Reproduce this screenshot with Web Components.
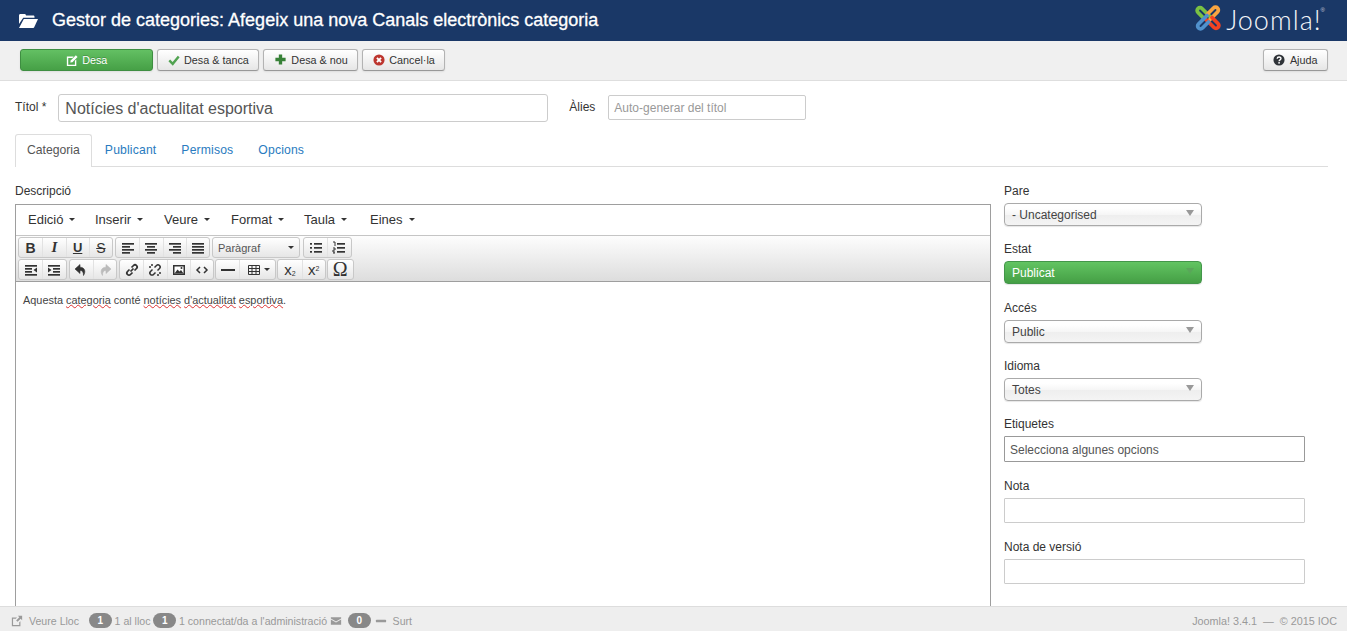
<!DOCTYPE html>
<html lang="ca">
<head>
<meta charset="utf-8">
<title>Gestor de categories</title>
<style>
    html, body { margin: 0; height: 100%; overflow: hidden; }
    body { font-family: "Liberation Sans", Arial, sans-serif; font-size: 12px; color: #333; background: #fff; }
</style>
</head>
<body>
<jm-app>
    <jm-header>Gestor de categories: Afegeix una nova Canals electrònics categoria</jm-header>
    <jm-subhead>
        <jm-btn kind="save" icon="edit" wide>Desa</jm-btn>
        <jm-btn icon="check">Desa &amp; tanca</jm-btn>
        <jm-btn icon="plus">Desa &amp; nou</jm-btn>
        <jm-btn icon="cancel">Cancel·la</jm-btn>
        <jm-btn slot="right" icon="help">Ajuda</jm-btn>
    </jm-subhead>
    <jm-form>
        <jm-titlerow></jm-titlerow>
        <jm-tabs></jm-tabs>
        <jm-editor slot="main"></jm-editor>
        <jm-side slot="side">
            <jm-select label="Pare" value="- Uncategorised" gap="15"></jm-select>
            <jm-select label="Estat" value="Publicat" green gap="16"></jm-select>
            <jm-select label="Accés" value="Public" gap="15"></jm-select>
            <jm-select label="Idioma" value="Totes" gap="15"></jm-select>
            <jm-input label="Etiquetes" value="Selecciona algunes opcions" strong gap="16"></jm-input>
            <jm-input label="Nota" gap="16"></jm-input>
            <jm-input label="Nota de versió" gap="0"></jm-input>
        </jm-side>
    </jm-form>
    <jm-status></jm-status>
</jm-app>

<script>
const ICONS = {
    edit: '<path d="M1 3h8L7.5 4.6H2.6v7.8h7.8V8l1.6-1.6V14H1z" fill="currentColor"/><path d="M11.5 1.5l2 2L7.5 9.5 5 10l.5-2.5z" fill="currentColor"/>',
    check: '<path d="M1.5 7.5L5.5 11.5 12.5 3" fill="none" stroke="currentColor" stroke-width="2.8"/>',
    plus: '<path d="M7 1.5v11M1.5 7h11" fill="none" stroke="currentColor" stroke-width="3.6"/>',
    cancel: '<circle cx="7" cy="7" r="6.5" fill="currentColor"/><path d="M4.6 4.6l4.8 4.8M9.4 4.6l-4.8 4.8" stroke="#fff" stroke-width="2.2"/>',
    help: '<circle cx="7" cy="7" r="6.5" fill="currentColor"/><path d="M4.9 5.4c0-2.6 4.4-2.6 4.4-.1 0 1.6-2.2 1.5-2.2 3.1" fill="none" stroke="#fff" stroke-width="1.6"/><rect x="6.2" y="9.4" width="1.8" height="1.8" fill="#fff"/>',
    external: '<path d="M1 3h6L5.6 4.4H2.4v7.2h7.2V8.6L11 7.2V13H1z" fill="currentColor"/><path d="M8 1h5v5l-1.7-1.7L7.6 8 6 6.4l3.700-3.700z" fill="currentColor"/>',
    mail: '<path d="M1 2.500h12v1.500L7 7.500 1 4zM1 5.300L7 8.700l6-3.400V11.500H1z" fill="currentColor"/>',
    minus: '<rect x="1" y="5.500" width="12" height="3" rx="1" fill="currentColor"/>'
}

function svgIcon(name, size, color) {
    return `<svg width="${size}" height="${size}" viewBox="0 0 14 14" style="color:${color};display:block;flex:none">${ICONS[name]}</svg>`
}

class JmApp extends HTMLElement {
    constructor() {
        super()
        this.attachShadow({ mode: 'open' })
        this.shadowRoot.innerHTML = `
            <style>
                :host { display: flex; flex-direction: column; height: 631px; overflow: hidden; }
                ::slotted(*) { flex: none; }
                ::slotted(jm-form) { flex: 1 1 0; min-height: 0; }
            </style>
            <slot></slot>
        `
    }
}

class JmHeader extends HTMLElement {
    constructor() {
        super()
        this.attachShadow({ mode: 'open' })
        const arm = 'M16.500 13L8 4.500A2.800 2.800 0 0 0 4 8.500L10 14.500'
        this.shadowRoot.innerHTML = `
            <style>
                :host { display: flex; align-items: center; height: 41px; padding: 0 22px 0 19px; background: #1a3867; color: #fff; }
                .folder { margin-right: 14px; flex: none; display: block; }
                .title { font-size: 18px; font-weight: 400; -webkit-text-stroke: 0.3px #fff; white-space: nowrap; flex: 1; }
                .logo { display: flex; align-items: flex-start; flex: none; height: 41px; }
                .mark { display: block; margin: 4px 4px 0 0; }
                .word { font-family: Lato, "Open Sans", sans-serif; font-weight: 300; font-size: 27px; line-height: 40px; letter-spacing: 1px; color: #f4f6f9; }
                .reg { font-size: 6px; line-height: 20px; color: #ccd; margin-left: -1px; }
            </style>
            <svg class="folder" width="19" height="14" viewBox="0 0 19 14">
                <path d="M0 1.500C0 .700.600 0 1.400 0h4.200c.800 0 1.200.600 1.400 1.400h7.200c.800 0 1.300.500 1.300 1.300V3.800H4.200L0 10z" fill="#fff"/>
                <path d="M4.800 5H19l-3.800 8.300c-.200.400-.500.700-1 .700H0z" fill="#fff"/>
            </svg>
            <div class="title"><slot></slot></div>
            <div class="logo">
                <svg class="mark" width="28" height="28" viewBox="0 0 28 28" fill="none" stroke-width="3.800" stroke-linecap="round">
                    <path stroke="#7ac143" d="${arm}"/>
                    <path stroke="#f9a541" d="${arm}" transform="rotate(90 14 14)"/>
                    <path stroke="#f44321" d="${arm}" transform="rotate(180 14 14)"/>
                    <path stroke="#5091cd" d="${arm}" transform="rotate(270 14 14)"/>
                </svg>
                <span class="word">Joomla!</span><span class="reg">®</span>
            </div>
        `
    }
}

class JmSubhead extends HTMLElement {
    constructor() {
        super()
        this.attachShadow({ mode: 'open' })
        this.shadowRoot.innerHTML = `
            <style>
                :host { display: flex; align-items: center; gap: 4px; box-sizing: content-box; height: 37px; padding: 0 19px 2px 20px; background: #f0f0f0; border-bottom: 1px solid #dedede; }
                .right { margin-left: auto; display: flex; }
            </style>
            <slot></slot>
            <div class="right"><slot name="right"></slot></div>
        `
    }
}

class JmBtn extends HTMLElement {
    constructor() {
        super()
        this.attachShadow({ mode: 'open' })
        const kinds = { check: '#51a351', plus: '#378137', cancel: '#bd362f', help: '#2f3338', edit: '#fff' }
        const name = this.getAttribute('icon')
        this.shadowRoot.innerHTML = `
            <style>
                :host { display: inline-flex; align-items: center; justify-content: center; box-sizing: border-box; height: 22px; padding: 0 9.500px; gap: 4.500px;
                    font-size: 10.800px; color: #333; border: 1px solid #b3b3b3; border-bottom-color: #999; border-radius: 3px;
                    background: linear-gradient(#fff, #e6e6e6); box-shadow: 0 1px 2px rgba(0,0,0,.08); white-space: nowrap; }
                :host([kind="save"]) { color: #fff; border-color: #3e8e41; background: linear-gradient(#63c063, #46a046); text-shadow: 0 -1px 0 rgba(0,0,0,.2); }
                :host([wide]) { width: 133px; }
            </style>
            ${svgIcon(name, name === 'plus' ? 13 : 12, kinds[name])}
            <slot></slot>
        `
    }
}

class JmForm extends HTMLElement {
    constructor() {
        super()
        this.attachShadow({ mode: 'open' })
        this.shadowRoot.innerHTML = `
            <style>
                :host { display: block; padding: 13px 19px 0 15px; overflow: hidden; }
                .cols { display: flex; gap: 13px; height: 100%; }
                .main { width: 976px; flex: none; }
                label { display: block; line-height: 15px; padding-top: 1px; margin-bottom: 5px; font-size: 12px; color: #333; }
            </style>
            <slot></slot>
            <div class="cols">
                <div class="main">
                    <label>Descripció</label>
                    <slot name="main"></slot>
                </div>
                <slot name="side"></slot>
            </div>
        `
    }
}

class JmTitlerow extends HTMLElement {
    constructor() {
        super()
        this.attachShadow({ mode: 'open' })
        this.shadowRoot.innerHTML = `
            <style>
                :host { display: flex; align-items: center; height: 28px; margin-bottom: 12px; font-size: 12px; color: #333; }
                label { flex: none; margin-top: -3px; }
                .title { box-sizing: border-box; width: 490px; height: 28px; margin-left: 12px; padding: 0 6px; font-size: 16px; line-height: 27px; color: #555;
                    border: 1px solid #ccc; border-radius: 3px; white-space: nowrap; }
                .alias-label { margin-left: 21px; }
                .alias { box-sizing: border-box; width: 198px; height: 25px; align-self: flex-start; margin: 1px 0 0 13px; padding: 0 5px; font-size: 12px; line-height: 24px; color: #999;
                    border: 1px solid #ccc; border-radius: 2px; white-space: nowrap; }
            </style>
            <label>Títol *</label>
            <div class="title">Notícies d'actualitat esportiva</div>
            <label class="alias-label">Àlies</label>
            <div class="alias">Auto-generar del títol</div>
        `
    }
}

class JmTabs extends HTMLElement {
    constructor() {
        super()
        this.attachShadow({ mode: 'open' })
        this.shadowRoot.innerHTML = `
            <style>
                :host { display: flex; height: 32px; margin-bottom: 16px; border-bottom: 1px solid #ddd; font-size: 12.200px; color: #2a7bc0; }
                a { display: block; padding: 0 11px; line-height: 31px; margin-right: 1px; border: 1px solid transparent; border-bottom: 0; height: 32px; letter-spacing: .15px; }
                a.on { color: #555; background: #fff; border-color: #ddd; border-radius: 3px 3px 0 0; letter-spacing: 0; }
            </style>
            <a class="on">Categoria</a>
            <a>Publicant</a>
            <a>Permisos</a>
            <a>Opcions</a>
        `
    }
}

// toolbar glyphs for the tinymce rows, 16x16 box
function lines(rows) {
    return rows.map(([x, y, w]) => `<rect x="${x}" y="${y}" width="${w}" height="1.700" fill="#333"/>`).join('')
}
const MCE = {
    left: lines([[2, 3, 12], [2, 6, 8], [2, 9, 12], [2, 12, 8]]),
    center: lines([[2, 3, 12], [4, 6, 8], [2, 9, 12], [4, 12, 8]]),
    right: lines([[2, 3, 12], [6, 6, 8], [2, 9, 12], [6, 12, 8]]),
    full: lines([[2, 3, 12], [2, 6, 12], [2, 9, 12], [2, 12, 12]]),
    ul: '<rect x="2" y="3" width="2" height="1.700" fill="#333"/><rect x="2" y="7" width="2" height="1.700" fill="#333"/><rect x="2" y="11" width="2" height="1.700" fill="#333"/>' + lines([[6, 3, 8], [6, 7, 8], [6, 11, 8]]),
    ol: '<path d="M2 2h2v4M2 8h2v2H2v2h2M2 13h2" fill="none" stroke="#333" stroke-width="1"/>' + lines([[6, 3, 8], [6, 7, 8], [6, 11, 8]]),
    outdent: lines([[2, 3, 12], [2, 6, 7], [2, 9, 7], [2, 12, 12]]) + '<path d="M14 5.500v5l-3.500-2.500z" fill="#333"/>',
    indent: lines([[2, 3, 12], [7, 6, 7], [7, 9, 7], [2, 12, 12]]) + '<path d="M2 5.500v5l3.500-2.500z" fill="#333"/>',
    undo: '<path d="M7 2.500L2 7l5 4.500V8.500c2.500 0 3.500 1.500 3.500 5 2.500-4 1.500-8-3.500-8.300z" fill="#333" stroke="#333" stroke-width=".6"/>',
    redo: '<path d="M9 2.500L14 7 9 11.500V8.500c-2.500 0-3.500 1.500-3.500 5-2.500-4-1.500-8 3.500-8.300z" fill="#bbb" stroke="#bbb" stroke-width=".6"/>',
    link: '<path d="M6.500 9.500l3-3M5.500 7.500L3.500 9.500a2.100 2.100 0 0 0 3 3l2-2M10.500 8.500l2-2a2.100 2.100 0 0 0-3-3l-2 2" fill="none" stroke="#333" stroke-width="1.700"/>',
    unlink: '<path d="M5.500 7.500L3.500 9.500a2.100 2.100 0 0 0 3 3l2-2M10.500 8.500l2-2a2.100 2.100 0 0 0-3-3l-2 2M2 5h2M5 2v2M12 11h2M11 12v2" fill="none" stroke="#333" stroke-width="1.500"/>',
    image: '<path d="M2 3h12v10H2z" fill="#333"/><path d="M3.500 4.500h9v7h-9z" fill="#fff"/><path d="M3.500 11.500l3-4 2 2 1.500-1.500 2.500 3.500z" fill="#333"/><circle cx="10.500" cy="6" r="1" fill="#333"/>',
    code: '<path d="M6 5L3 8l3 3M10 5l3 3-3 3" fill="none" stroke="#333" stroke-width="1.500"/>',
    hr: '<rect x="1" y="7" width="14" height="2" fill="#333"/>',
    table: '<path d="M2.500 3.500h11v9h-11zM2.500 6.500h11M2.500 9.500h11M6 3.500v9M10 3.500v9" fill="none" stroke="#333"/>'
}

class JmEditor extends HTMLElement {
    constructor() {
        super()
        this.attachShadow({ mode: 'open' })
        const items = [['Edició', 67], ['Inserir', 69], ['Veure', 67], ['Format', 73], ['Taula', 66], ['Eines', 50]]
        const menu = items.map(([m, w]) => `<span class="mi" style="width:${w}px">${m}<i class="caret"></i></span>`).join('')
        const ico = n => `<span class="b"><svg width="16" height="16" viewBox="0 0 16 16">${MCE[n]}</svg></span>`
        const txt = (t, cls) => `<span class="b ${cls}">${t}</span>`
        this.shadowRoot.innerHTML = `
            <style>
                :host { display: block; box-sizing: border-box; height: 420px; border: 1px solid #9e9e9e; border-bottom: 0; background: #fff; }
                .menu { display: flex; box-sizing: border-box; height: 31px; align-items: center; padding: 0 0 2px 12px; font-size: 13px; color: #333; border-bottom: 1px solid #c5c5c5; background: #fff; }
                .mi { display: inline-flex; align-items: center; flex: none; }
                .caret { width: 0; height: 0; margin-left: 6px; border: 3px solid transparent; border-top-color: #333; border-bottom: 0; }
                .tools { height: 46px; padding: 1px 0 0 2px; box-sizing: border-box; border-bottom: 1px solid #9e9e9e; background: linear-gradient(#fdfdfd, #ddd); }
                .row { display: flex; gap: 2px; height: 22px; }
                .g { display: flex; height: 21px; box-sizing: border-box; border: 1px solid #c8c8c8; border-radius: 3px; background: linear-gradient(#fff, #e6e6e6); }
                .b { display: flex; align-items: center; justify-content: center; width: 23.250px; box-sizing: border-box; color: #333; flex: none; }
                .b + .b { border-left: 1px solid #e2e2e2; }
                .sel { width: 86px; justify-content: space-between; padding: 0 5px; font-size: 11px; color: #555; }
                .wide { width: 36px; gap: 2px; }
                .bold { font: bold 14px "Liberation Sans", sans-serif; }
                .it { font: italic bold 15px "Liberation Serif", serif; }
                .un { font: bold 13px "Liberation Sans", sans-serif; text-decoration: underline; }
                .st { font: 14px "Liberation Sans", sans-serif; text-decoration: line-through; }
                .omega { width: 25px; font: 20px "Liberation Serif", serif; }
                .sub { font: 15px "Liberation Sans", sans-serif; }
                .sub small { font-size: 7px; position: relative; top: 4px; }
                .sub sup { font-size: 7px; line-height: 0; position: relative; top: -1px; vertical-align: 4px; }
                .body { padding: 11px 7px; font-size: 10.900px; line-height: 14px; color: #444; }
                u { text-decoration: underline wavy #d33; text-decoration-thickness: 1px; text-underline-offset: 0; }
            </style>
            <div class="menu">${menu}</div>
            <div class="tools">
                <div class="row">
                    <div class="g">${txt('B', 'bold')}${txt('I', 'it')}${txt('U', 'un')}${txt('S', 'st')}</div>
                    <div class="g">${ico('left')}${ico('center')}${ico('right')}${ico('full')}</div>
                    <div class="g"><span class="b sel">Paràgraf<i class="caret"></i></span></div>
                    <div class="g" style="margin-left:1px">${ico('ul')}${ico('ol')}</div>
                </div>
                <div class="row">
                    <div class="g">${ico('outdent')}${ico('indent')}</div>
                    <div class="g">${ico('undo')}${ico('redo')}</div>
                    <div class="g">${ico('link')}${ico('unlink')}${ico('image')}${ico('code')}</div>
                    <div class="g" style="margin-left:-1px">${ico('hr')}<span class="b wide"><svg width="16" height="16" viewBox="0 0 16 16">${MCE.table}</svg><i class="caret" style="margin:0"></i></span></div>
                    <div class="g" style="margin-left:-1px"><span class="b sub">x<small>2</small></span><span class="b sub">x<sup>2</sup></span></div>
                    <div class="g" style="margin-left:-1px">${txt('Ω', 'omega')}</div>
                </div>
            </div>
            <div class="body">Aquesta <u>categoria</u> conté <u>notícies</u> <u>d'actualitat</u> <u>esportiva</u>.</div>
        `
    }
}

class JmSide extends HTMLElement {
    constructor() {
        super()
        this.attachShadow({ mode: 'open' })
        this.shadowRoot.innerHTML = `
            <style>
                :host { display: block; flex: 1; }
            </style>
            <slot></slot>
        `
    }
}

class JmSelect extends HTMLElement {
    constructor() {
        super()
        this.attachShadow({ mode: 'open' })
        this.shadowRoot.innerHTML = `
            <style>
                :host { display: block; margin-bottom: ${this.getAttribute('gap')}px; font-size: 12px; color: #333; }
                label { display: block; line-height: 15px; padding-top: 1px; margin-bottom: 4px; }
                .sel { box-sizing: border-box; position: relative; width: 198px; height: 23px; padding: 0 7px; line-height: 23px; color: #444; border: 1px solid #aaa; border-radius: 4px;
                    background: linear-gradient(#fff 20%, #f6f6f6 50%, #eee 52%, #f4f4f4); box-shadow: 0 1px 1px rgba(0,0,0,.1); }
                :host([green]) .sel { color: #fff; border-color: #43964a; background: linear-gradient(#62c462, #459f45); }
                .arrow { position: absolute; right: 7px; top: 6px; width: 0; height: 0; border: 4px solid transparent; border-top: 6px solid #999; border-bottom: 0; }
                :host([green]) .arrow { border-top-color: #5aa65a; }
            </style>
            <label>${this.getAttribute('label')}</label>
            <div class="sel">${this.getAttribute('value')}<i class="arrow"></i></div>
        `
    }
}

class JmInput extends HTMLElement {
    constructor() {
        super()
        this.attachShadow({ mode: 'open' })
        this.shadowRoot.innerHTML = `
            <style>
                :host { display: block; margin-bottom: ${this.getAttribute('gap')}px; font-size: 12px; color: #333; }
                label { display: block; line-height: 15px; padding-top: 1px; margin-bottom: 4px; }
                .box { box-sizing: border-box; width: 301px; height: 25px; padding: 0 5px; line-height: 26px; color: #555; border: 1px solid #ccc; border-radius: 1px; background: #fff; white-space: nowrap; }
                :host([strong]) .box { height: 26px; border-color: #999; }
            </style>
            <label>${this.getAttribute('label')}</label>
            <div class="box">${this.getAttribute('value') || ''}</div>
        `
    }
}

class JmStatus extends HTMLElement {
    constructor() {
        super()
        this.attachShadow({ mode: 'open' })
        const badge = n => `<span class="badge">${n}</span>`
        this.shadowRoot.innerHTML = `
            <style>
                :host { display: flex; align-items: center; box-sizing: border-box; height: 25px; padding: 3px 10px 0 11px; background: #eee; border-top: 1px solid #ddd; font-size: 10.600px; color: #999; white-space: nowrap; }
                .badge { box-sizing: border-box; width: 22.500px; height: 15px; border-radius: 8px; background: #888; color: #fff; font-size: 10px; font-weight: bold; line-height: 15px; text-align: center; flex: none; }
                .push { margin-left: auto; font-size: 10.800px; }
            </style>
            ${svgIcon('external', 12, '#999')}
            <span style="margin-left:6px">Veure Lloc</span>
            <span style="margin-left:10px"></span>${badge(1)}
            <span style="margin-left:3px">1 al lloc</span>
            <span style="margin-left:3px"></span>${badge(1)}
            <span style="margin-left:3px">1 connectat/da a l'administració</span>
            <span style="margin-left:3px"></span>${svgIcon('mail', 12, '#999')}
            <span style="margin-left:6px"></span>${badge(0)}
            <span style="margin-left:4px"></span>${svgIcon('minus', 12, '#999')}
            <span style="margin-left:6px">Surt</span>
            <span class="push">Joomla! 3.4.1 &nbsp;— &nbsp;© 2015 IOC</span>
        `
    }
}

customElements.define('jm-app', JmApp)
customElements.define('jm-header', JmHeader)
customElements.define('jm-subhead', JmSubhead)
customElements.define('jm-btn', JmBtn)
customElements.define('jm-form', JmForm)
customElements.define('jm-titlerow', JmTitlerow)
customElements.define('jm-tabs', JmTabs)
customElements.define('jm-editor', JmEditor)
customElements.define('jm-side', JmSide)
customElements.define('jm-select', JmSelect)
customElements.define('jm-input', JmInput)
customElements.define('jm-status', JmStatus)
</script>
</body>
</html>
